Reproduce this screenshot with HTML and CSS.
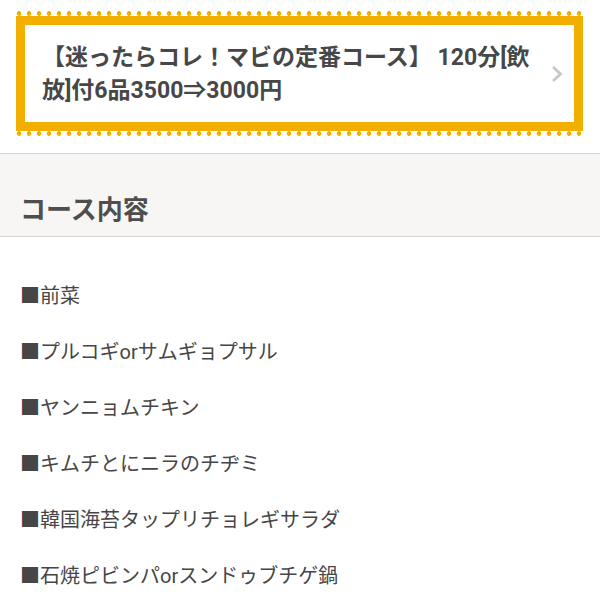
FILE: index.html
```html
<!DOCTYPE html>
<html lang="ja">
<head>
    <meta charset="UTF-8">
    <meta name="viewport" content="width=device-width, initial-scale=1.0">
    <title>コース内容</title>
    <link rel="stylesheet" href="styles.css">
</head>
<body>
    <div class="plan">
        <div class="plan-edge"></div>
        <a class="plan-box" href="#">
            <span class="plan-title">【迷ったらコレ！マビの定番コース】 120分[飲放]付6品3500⇒3000円</span>
            <span class="plan-arrow">
                <svg width="12" height="18" viewBox="0 0 12 18"><path d="M2 2 L9.5 9 L2 16" fill="none" stroke="#c6c6c6" stroke-width="2.8"/></svg>
            </span>
        </a>
        <div class="plan-edge"></div>
    </div>

    <div class="section-head">
        <h2>コース内容</h2>
    </div>

    <ul class="course-list">
        <li>■前菜</li>
        <li>■プルコギorサムギョプサル</li>
        <li>■ヤンニョムチキン</li>
        <li>■キムチとにニラのチヂミ</li>
        <li>■韓国海苔タップリチョレギサラダ</li>
        <li>■石焼ピビンパorスンドゥブチゲ鍋</li>
    </ul>
</body>
</html>
```

FILE: styles.css
```css
body {
    margin: 0;
    background: #fff;
    font-family: Roboto, "Noto Sans CJK JP", sans-serif;
    color: #444;
}
/* クーポン風の枠 */
.plan {
    margin: 11px 17px 0 16px;
}
.plan-edge {
    height: 5px;
    background: radial-gradient(circle at 3px 2.5px, #f2af00 2px, transparent 2.6px) repeat-x;
    background-size: 10px 5px;
}
.plan-box {
    display: flex;
    align-items: center;
    height: 97px;
    border: 9px solid #f2af00;
    padding: 0 11px 0 17px;
    text-decoration: none;
    color: #474747;
}
.plan-title {
    flex: 1;
    font-size: 23px;
    font-weight: 700;
    line-height: 33px;
    padding-right: 18px;
}
.plan-arrow {
    display: flex;
    width: 12px;
}
/* 見出し */
.section-head {
    margin-top: 17px;
    border-top: 1px solid #d2d2d2;
    border-bottom: 1px solid #d2d2d2;
    background: #f7f6f4;
    height: 84px;
    box-sizing: border-box;
    padding-top: 38px;
}
.section-head h2 {
    margin: 0 0 0 20px;
    font-size: 26px;
    line-height: 36px;
    font-weight: 700;
    color: #4e4e4e;
}
.course-list {
    list-style: none;
    margin: 0;
    padding: 31px 0 0 20px;
}
.course-list li {
    font-size: 20px;
    line-height: 56px;
    color: #464646;
}
```
